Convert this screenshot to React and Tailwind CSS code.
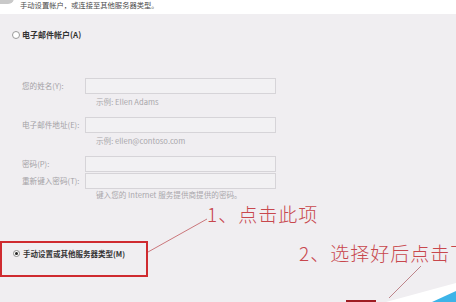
import React from "react";

const cjk = { fontFamily: '"Noto Sans CJK SC", "Noto Sans", sans-serif' };
const ann = { fontFamily: '"Noto Sans CJK SC", serif', fontWeight: 300 };

function Input({ label }) {
  return (
    <div className="flex items-center h-[16px]">
      <div className="w-[85px] pl-[22px] text-[7.6px] leading-none text-[#a3a1a5] whitespace-nowrap">{label}</div>
      <div className="w-[191px] h-[16px] border border-[#d6d4d8] bg-[#f2f1f3]" />
    </div>
  );
}

function Hint({ children, mt }) {
  return (
    <div className={"h-[8px] pl-[96px] text-[7.6px] leading-none text-[#a9a7ab] whitespace-nowrap " + mt}>{children}</div>
  );
}

export default function App() {
  return (
    <div className="relative w-[456px] h-[302px] overflow-hidden bg-[#f0eef1]" style={cjk}>
      <div className="h-[14px] bg-white flex items-center pl-[20px] relative">
        <div className="absolute left-[-6px] top-[-8px] w-[20px] h-[12px] rounded-full bg-[#c9c9c9]" />
        <span className="text-[7.3px] leading-none text-[#4a4a4a] mt-[-2px]">手动设置帐户，或连接至其他服务器类型。</span>
      </div>

      <div className="flex items-center pl-[12px] mt-[17px] h-[8px]">
        <div className="w-[8px] h-[8px] rounded-full border border-[#9a9a9a] bg-white" />
        <span className="ml-[2px] text-[8px] font-bold leading-none text-[#333]">电子邮件帐户(A)</span>
      </div>

      <div className="mt-[39px]">
        <Input label="您的姓名(Y):" />
        <Hint mt="mt-[4px]">示例: Ellen Adams</Hint>
      </div>
      <div className="mt-[11px]">
        <Input label="电子邮件地址(E):" />
        <Hint mt="mt-[4px]">示例: ellen@contoso.com</Hint>
      </div>
      <div className="mt-[11px]">
        <Input label="密码(P):" />
      </div>
      <div className="mt-[1px]">
        <Input label="重新键入密码(T):" />
        <Hint mt="mt-[2px]">键入您的 Internet 服务提供商提供的密码。</Hint>
      </div>

      <div className="mt-[42px] w-[148px] h-[36px] border-2 border-[#cf2a2f] flex items-start pt-[7px] pl-[11px]">
        <div className="w-[7px] h-[7px] rounded-full border border-[#8a8a8a] bg-white flex items-center justify-center">
          <div className="w-[3px] h-[3px] rounded-full bg-[#222]" />
        </div>
        <span className="ml-[3px] text-[7.5px] font-bold leading-none text-[#333] whitespace-nowrap">手动设置或其他服务器类型(M)</span>
      </div>

      <div className="absolute left-[207px] top-[204px] text-[19px] leading-none text-[#c8474d] tracking-[1px] whitespace-nowrap" style={ann}>
        1、点击此项
      </div>
      <div className="absolute left-[299px] top-[243px] text-[19px] leading-none text-[#c8474d] tracking-[1px] whitespace-nowrap" style={ann}>
        2、选择好后点击下一步
      </div>

      <svg className="absolute left-0 top-0" width="456" height="302" viewBox="0 0 456 302">
        <line x1="148" y1="252" x2="207" y2="219" stroke="#c0585d" strokeWidth="0.8" />
        <line x1="421" y1="266" x2="389" y2="298" stroke="#b06870" strokeWidth="0.8" />
        <polygon points="386,302 456,283 456,302" fill="#ffffff" />
        <polygon points="432,302 456,291 456,302" fill="#3db4e8" />
        <rect x="346" y="300" width="30" height="2" fill="#9e1c22" />
      </svg>
    </div>
  );
}
